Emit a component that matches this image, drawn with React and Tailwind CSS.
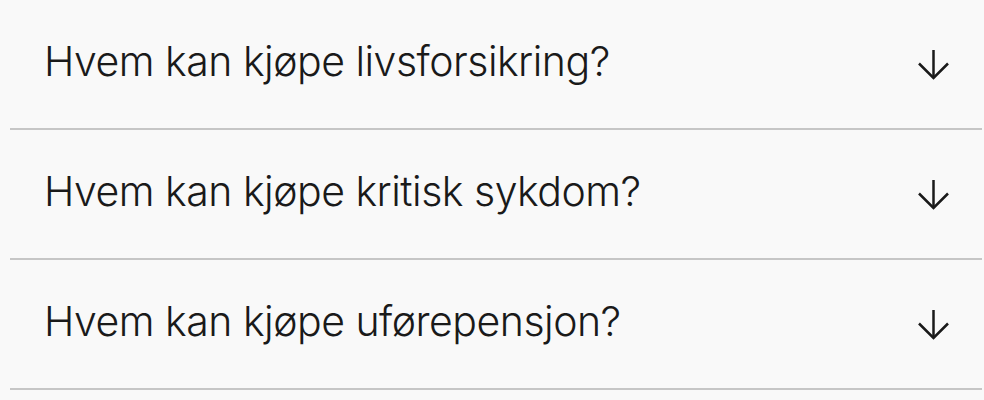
const items = [
  "Hvem kan kjøpe livsforsikring?",
  "Hvem kan kjøpe kritisk sykdom?",
  "Hvem kan kjøpe uførepensjon?",
];

function ArrowDown() {
  return (
    <svg width="31" height="31" viewBox="0 0 31 31" fill="none" stroke="#1a1a1a" strokeWidth="2.5" strokeLinecap="butt" strokeLinejoin="miter" className="shrink-0">
      <path d="M15.5 1V29" />
      <path d="M1 14.5L15.5 29L30 14.5" />
    </svg>
  );
}

export default function App() {
  return (
    <div className="min-h-[400px] bg-[#f9f9f9]" style={{ fontFamily: "Inter, sans-serif" }}>
      <div className="ml-[10px] mr-[2px]">
        {items.map((t) => (
          <button
            key={t}
            className="flex h-[130px] w-full items-center justify-between border-b-2 border-[#c6c6c6] pl-[34px] pr-[33px] text-left"
          >
            <span className="-mt-[5px] whitespace-nowrap text-[41px] font-[350] leading-[41px] tracking-[-0.5px] text-[#1a1a1a]">
              {t}
            </span>
            <ArrowDown />
          </button>
        ))}
      </div>
    </div>
  );
}
